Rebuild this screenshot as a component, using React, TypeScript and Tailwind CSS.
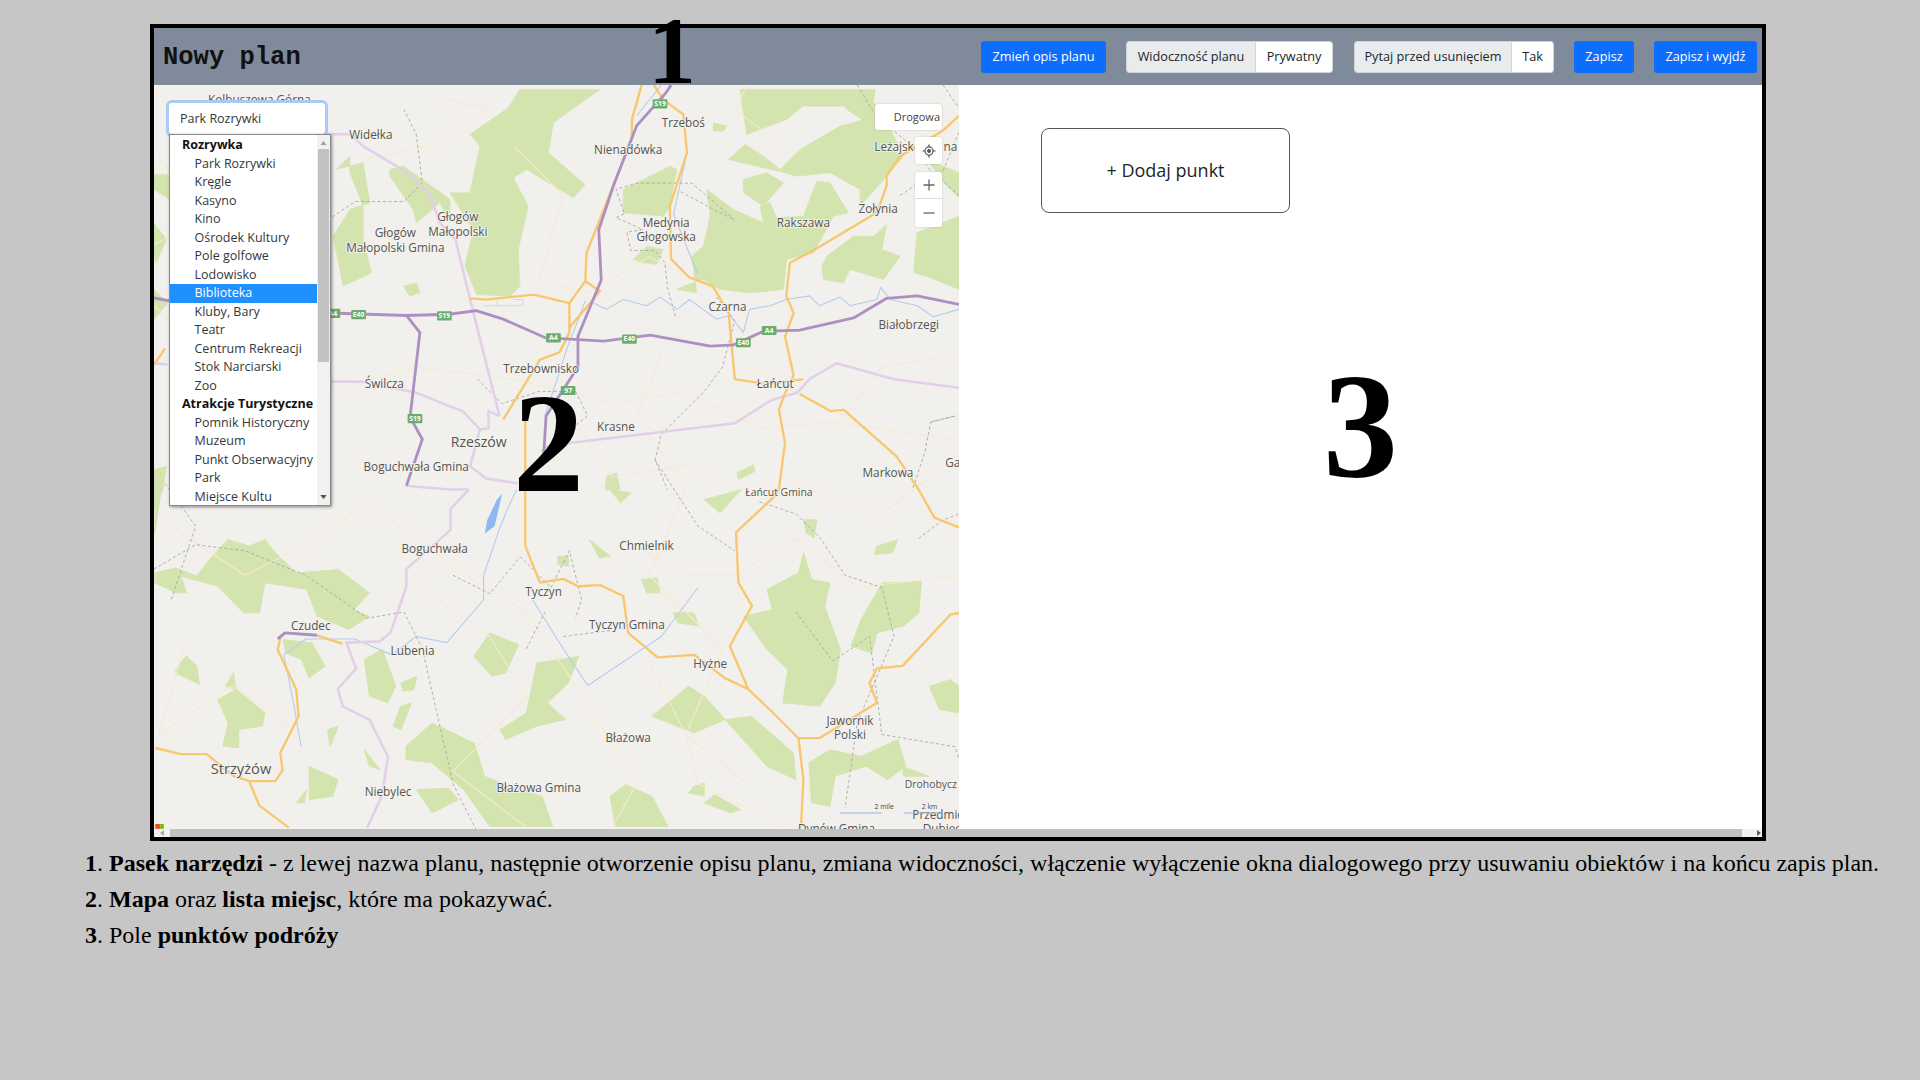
import React from "react";

// map is traced from the reference, so groups use the coordinates of the zoom they came from
const forestTop: string[] = [
  "175,55 60,135 90,170 60,310 0,310 70,420 45,530 80,615 180,620 210,590 205,480 235,350 190,265 230,240 370,325 405,285 295,190 310,100 450,0 210,0",
  "870,0 890,135 1010,90 1060,50 1180,50 1190,0",
  "1180,50 1190,60 1280,120 1380,120 1270,40 1275,0 1190,0",
  "770,300 850,360 940,400 930,350 960,340 980,385 1060,380 1100,275 1140,280 1195,370 1150,380 1090,490 1010,510 1000,600 900,610 810,600 760,570 700,590 680,600 740,610 725,500 760,470 780,380",
  "835,210 885,165 940,200 990,240 1050,180 1170,110 1300,75 1360,200 1310,260 1230,350 1230,300 1140,250 1040,260 1005,250",
  "880,270 950,250 1000,280 940,350 880,310",
  "520,300 660,230 680,240 660,350 640,380 520,370",
  "550,510 590,470 640,480 620,525 580,520",
  "1115,530 1130,500 1210,440 1270,440 1310,405 1295,480 1350,500 1300,570 1200,540 1180,580 1120,570",
  "1400,430 1527,380 1527,600 1430,560 1390,550",
  "790,100 830,110 820,125 790,125",
  "1430,210 1527,250 1527,325 1490,290",
  "860,1150 910,1125 915,1145 865,1170",
  "470,1160 500,1150 510,1200 465,1200",
];

const forestLeft: string[] = [
  "600,200 560,240 640,220 660,340 600,360 550,440 580,590 665,550 640,450 640,350 600,250",
  "720,240 760,230 860,300 900,330 900,400 870,340 800,400 790,360 720,260",
  "760,590 800,580 810,610 780,620",
  "12,255 55,255 60,330 12,300",
  "12,400 50,450 20,520 12,500",
  "12,600 55,640 12,690",
  "12,1140 50,1130 40,1200 12,1260",
];

const forestBottom: string[] = [
  "10,250 50,235 90,260 120,200 150,150 190,170 220,150 240,190 280,250 360,240 420,310 390,360 420,380 380,420 320,380 300,300 220,280 210,370 180,370 130,290 60,260 70,310 50,310 10,280",
  "255,450 310,460 335,530 305,565 290,510 260,490",
  "130,630 165,600 220,670 215,710 170,720 170,775 140,770 150,700",
  "50,540 70,500 90,530 95,585 50,550",
  "145,590 160,550 165,600",
  "410,510 445,480 470,590 455,640 420,620",
  "620,500 650,430 705,465 680,550 655,560",
  "740,520 820,500 800,580 760,640 795,690 740,710 680,750 670,720 720,670",
  "540,700 620,760 640,860 690,890 750,920 770,1010 650,1010 600,900 540,820 490,810 490,770",
  "305,830 360,870 350,920 305,930",
  "510,900 570,895 590,930 540,970",
  "880,920 910,885 960,920 990,1010 890,1010",
  "960,680 1030,590 1060,620 1100,690 1040,730",
  "1100,690 1150,680 1230,790 1235,870 1180,830",
  "1135,380 1190,360 1180,300 1240,250 1250,190 1265,270 1300,280 1290,350 1320,480 1310,580 1280,650 1210,640 1220,540 1180,480",
  "1400,280 1475,275 1470,370 1440,410 1390,430 1380,490 1340,470 1360,390",
  "1260,820 1300,780 1360,800 1430,750 1445,830 1410,870 1370,830 1310,860 1300,950 1265,940",
  "1490,590 1530,570 1547,590 1547,670 1510,660",
  "1390,170 1430,150 1420,190 1385,195",
  "1250,90 1275,90 1270,145 1255,130",
  "1060,30 1130,0 1090,70",
  "880,0 920,10 900,40",
  "840,150 880,200 860,205",
  "940,270 970,265 975,310 950,310",
  "1000,370 1040,370 1050,410 1010,400",
  "780,200 800,200 800,230 780,225",
  "1040,890 1060,880 1060,920 1030,910",
  "1060,940 1080,915 1130,960 1110,970",
  "1440,860 1490,860 1440,830",
  "10,20 20,20 10,130",
  "280,940 300,900 295,940",
  "340,720 360,710 345,770",
  "410,780 440,840 420,830",
  "480,650 500,640 480,720 465,710",
  "480,580 510,560 505,600 485,605",
];

const minorRoads: string[] = [
  "126,250 180,300 270,320 340,300 420,310 500,330 560,320 620,350 680,345 783,360",
  "420,120 460,160 440,230 480,240 530,210 590,240",
  "540,290 520,340 560,400 530,470 590,530 560,600 610,640",
  "610,300 690,340 720,300 783,290",
  "140,430 200,470 260,440 300,410 380,470 430,500 470,560 520,640 500,676",
  "330,470 400,520 430,570 370,630 430,676",
  "150,530 130,600 190,560 245,600",
  "480,480 510,440 560,470 600,470 650,440 700,480 783,470",
  "530,540 560,600 570,640 640,676",
  "660,400 720,420 760,390",
  "300,130 350,120 400,90 360,80",
  "640,120 600,90 610,70",
  "460,330 500,390 560,380 600,400",
  "130,130 170,180 126,200",
];

const borders: string[] = [
  "770,70 788,96 770,140 750,150 735,160",
  "556,157 580,170 600,180 565,150 520,150 503,155 510,175 503,178 525,188 512,190 515,205 535,205 543,215 545,235 552,260",
  "700,70 715,95 745,120 760,140 783,160",
  "585,243 600,262 590,300 575,320 540,355 535,376 545,400",
  "535,376 570,430 600,450",
  "126,465 160,445 200,450 250,470 300,505 330,500 345,530",
  "370,470 400,485 425,455 450,480 465,450 475,490 470,505",
  "430,530 445,500",
  "345,530 370,640 390,680",
  "460,520 500,515",
  "620,410 650,420 670,440 690,470 720,480 730,520 700,590 690,660",
  "650,500 680,540 710,520 720,600 780,610 783,620",
  "750,440 770,425 783,420",
  "760,345 780,340 760,345 755,370 745,400",
  "390,310 410,330 440,320 470,320 480,340 440,370",
  "268,180 290,165 330,165 345,150 340,110 330,90",
  "135,395 160,430 140,490",
];

const highways: string[] = [
  "122,243 160,250 270,256 332,258 367,257 389,254 411,261 445,276 493,279 531,274 580,283 599,282 623,271 653,270 697,260 724,244 749,242 783,249",
  "548,70 544,76 520,103 501,152 489,188 491,229 472,275 472,300 446,340 444,373",
  "332,258 343,272 335,341 345,359 332,397",
  "227,522 233,517 259,519",
];

const secondary: string[] = [
  "383,400 368,416 368,433 332,465 332,479 319,517 310,524 283,525 291,546 276,563 280,577 302,588 317,618 312,650 300,676",
  "465,362 600,346 630,327 651,321 661,310 683,297 730,310 783,317",
  "267,110 286,110 297,120 332,141 351,158 359,182 372,196 386,253 408,340",
  "408,340 399,336 399,350 392,351 378,336 367,332 340,321 296,312 270,312",
  "392,351 384,381 397,391 423,395",
  "332,397 367,400 383,400",
  "444,373 465,362",
  "126,297 137,298",
];

const orangeRoads: string[] = [
  "524,70 516,98 516,114 479,207 478,230 465,248 465,272 457,288 441,294 411,343",
  "384,244 397,245 436,241 465,248",
  "478,230 490,238 465,268",
  "534,70 542,82 558,94 561,125 547,169 548,212 563,227 582,234 595,256 600,310 626,314 656,310",
  "783,95 770,107 735,128 724,144 724,152 716,174 664,205 645,215 642,242 648,256 641,275 648,307 640,324 636,335 641,362 636,400 631,407 601,435 603,476 614,495 596,528 611,563 631,582 652,603 669,603 716,574 710,558 716,546 737,544 776,502 783,501",
  "653,322 678,336 689,335 732,373 750,400 763,423 783,431",
  "429,342 429,446 441,476 460,473 472,479 490,478 509,487 513,517 537,537 567,535 592,554 611,563",
  "652,603 656,637 654,676",
  "127,611 148,616 169,616 191,634 204,638 225,638 231,629 229,615 244,585 242,563 227,531 229,521",
  "259,519 280,526",
  "204,639 212,658 236,676",
  "126,298 135,285",
];

const rivers: string[] = [
  "485,248 495,253 509,245 528,250 539,243 553,253 563,245 585,261 596,258 607,272 612,253 629,250 642,245 661,242 669,250 686,243 694,250 716,245 719,235 727,245 749,250 762,259 783,253",
  "478,246 472,262 463,285 455,310 445,340",
  "422,400 414,417 408,432 395,470 395,490 365,525 340,520 320,535 290,522 250,522 232,535 240,575 246,610",
  "520,95 540,70",
  "560,130 550,175 570,225",
  "435,490 460,530 480,560 540,520 570,480",
];

const labels: [number, number, string, number?][] = [
  [212, 85, "Kolbuszowa Górna"],
  [303, 114, "Widełka"],
  [558, 104, "Trzeboś"],
  [513, 126, "Nienadówka"],
  [730, 124, "Leżajsk"],
  [776, 124, "na"],
  [717, 174, "Żołynia"],
  [656, 186, "Rakszawa"],
  [374, 181, "Głogów"],
  [374, 193, "Małopolski"],
  [323, 194, "Głogów"],
  [323, 206, "Małopolski Gmina"],
  [544, 186, "Medynia"],
  [544, 197, "Głogowska"],
  [594, 254, "Czarna"],
  [742, 269, "Białobrzegi"],
  [442, 305, "Trzebownisko"],
  [314, 317, "Świlcza"],
  [633, 317, "Łańcut"],
  [503, 352, "Krasne"],
  [391, 365, "Rzeszów", 11.5],
  [340, 385, "Boguchwała Gmina"],
  [725, 390, "Markowa"],
  [778, 382, "Ga"],
  [636, 405, "Łańcut Gmina", 8.5],
  [528, 449, "Chmielnik"],
  [355, 452, "Boguchwała"],
  [444, 487, "Tyczyn"],
  [512, 514, "Tyczyn Gmina"],
  [254, 515, "Czudec"],
  [337, 535, "Lubenia"],
  [580, 546, "Hyżne"],
  [694, 592, "Jawornik"],
  [694, 604, "Polski"],
  [513, 606, "Błażowa"],
  [197, 632, "Strzyżów", 12],
  [317, 650, "Niebylec"],
  [440, 647, "Błażowa Gmina"],
  [760, 644, "Drohobycz", 8.5],
  [766, 669, "Przedmie"],
  [683, 680, "Dynów Gmina"],
  [769, 680, "Dubiec"],
];

const shields: [number, number, string][] = [
  [539, 85, "S19"],
  [452, 276, "A4"],
  [514, 277, "E40"],
  [607, 280, "E40"],
  [628, 270, "A4"],
  [464, 319, "97"],
  [339, 342, "S19"],
  [363, 258, "S19"],
  [293, 257, "E40"],
  [272, 256, "A4"],
];

const places: { name: string; group?: boolean; active?: boolean }[] = [
  { name: "Rozrywka", group: true },
  { name: "Park Rozrywki" },
  { name: "Kręgle" },
  { name: "Kasyno" },
  { name: "Kino" },
  { name: "Ośrodek Kultury" },
  { name: "Pole golfowe" },
  { name: "Lodowisko" },
  { name: "Biblioteka", active: true },
  { name: "Kluby, Bary" },
  { name: "Teatr" },
  { name: "Centrum Rekreacji" },
  { name: "Stok Narciarski" },
  { name: "Zoo" },
  { name: "Atrakcje Turystyczne", group: true },
  { name: "Pomnik Historyczny" },
  { name: "Muzeum" },
  { name: "Punkt Obserwacyjny" },
  { name: "Park" },
  { name: "Miejsce Kultu" },
];

function Lines({ data, className, width }: { data: string[]; className: string; width: number }) {
  return (
    <>
      {data.map((points) => (
        <polyline key={points} points={points} fill="none" strokeWidth={width} strokeLinejoin="round" className={className} />
      ))}
    </>
  );
}

function MapDrawing() {
  return (
    <svg viewBox="126 70 657 607" className="absolute inset-0 h-full w-full" aria-hidden="true">
      <rect x="126" y="70" width="657" height="607" fill="#f1f0ec" />
      <g fill="#d3e4ae" stroke="#d3e4ae" strokeWidth="2" strokeLinejoin="round">
        <g transform="translate(367.5 73.5) scale(.2722)">
          {forestTop.map((p) => <polygon key={p} points={p} />)}
        </g>
        <g transform="translate(122.5 73.5) scale(.2722)">
          {forestLeft.map((p) => <polygon key={p} points={p} />)}
        </g>
        <g transform="translate(122.5 400) scale(.427 .2722)">
          {forestBottom.map((p) => <polygon key={p} points={p} />)}
        </g>
      </g>
      <Lines data={minorRoads} className="stroke-[#f6ead0]" width={0.9} />
      <Lines data={rivers} className="stroke-[#b4ccee]" width={0.9} />
      <polygon points="398,425 406,408 410,404 404,430 396,436" fill="#8fb8f0" />
      <g strokeDasharray="2.5 2">
        <Lines data={borders} className="stroke-[#a5a5a0]" width={0.7} />
      </g>
      <Lines data={secondary} className="stroke-[#e2cfe8]" width={2.1} />
      <Lines data={orangeRoads} className="stroke-[#f8c76d]" width={1.9} />
      <Lines data={highways} className="stroke-[#ae8fc2]" width={2.3} />
      <path d="M395 250h32v-5h-8M406 250v-4" fill="none" stroke="#cfcdc9" strokeWidth="0.6" />
      {shields.map(([x, y, text]) => (
        <g key={`${x}-${y}`}>
          <rect x={x - 6} y={y - 3.5} width="12" height="7.5" rx="0.8" fill="#6aae6d" />
          <text x={x} y={y + 2.2} textAnchor="middle" fontSize="5.6" fontWeight="700" fill="#ffffff" className="font-['Open_Sans',sans-serif]">
            {text}
          </text>
        </g>
      ))}
      <g fill="#55534f" textAnchor="middle" className="font-['Open_Sans',sans-serif]">
        {labels.map(([x, y, text, size]) => (
          <text key={`${text}-${x}`} x={x} y={y} fontSize={size ?? 9.6} stroke="#f4f3ef" strokeWidth="1.4" className="[paint-order:stroke]">
            {text}
          </text>
        ))}
      </g>
      {/* scale */}
      <g fontSize="5.6" fill="#444444" textAnchor="middle" className="font-['Open_Sans',sans-serif]">
        <text x="722" y="661">2 mile</text>
        <text x="759" y="661">2 km</text>
      </g>
      <path d="M686 664h34M738 664h32" stroke="#8fb8ee" strokeWidth="0.9" fill="none" />
      <rect x="127" y="673" width="4" height="4" fill="#f25022" />
      <rect x="131" y="673" width="3" height="4" fill="#7fba00" />
    </svg>
  );
}

function PlaceSelect() {
  return (
    <div className="absolute left-[15px] top-[18px] z-10 w-[162px] text-[#33373b]">
      <div className="h-[31px] w-[156px] rounded-[3px] bg-white pl-[11px] text-[12.5px] leading-[31px] shadow-[0_0_0_3px_#a9c9f7]">
        Park Rozrywki
      </div>
      <div className="flex h-[372px] border border-[#8a8a8a] bg-white shadow-[1px_1px_3px_rgba(0,0,0,0.45)]">
        <ul className="w-[147px] shrink-0 pt-[1px]">
          {places.map((place) => (
            <li
              key={place.name}
              className={`h-[18.5px] truncate text-[12.5px] leading-[18.5px] ${
                place.group ? "pl-[12px] font-bold text-[#111111]" : "pl-[24.5px]"
              } ${place.active ? "bg-[#1e90ff] text-white" : ""}`}
            >
              {place.name}
            </li>
          ))}
        </ul>
        <div className="flex w-[14px] flex-col items-center bg-[#f1f1f1]">
          <svg viewBox="0 0 8 5" className="mt-[6px] h-[4px] w-[7px] fill-[#a3a3a3]">
            <path d="M4 0l4 5H0z" />
          </svg>
          <div className="mt-[4px] h-[213px] w-[11px] bg-[#c1c1c1]" />
          <svg viewBox="0 0 8 5" className="mt-auto mb-[6px] h-[4px] w-[7px] fill-[#505050]">
            <path d="M0 0h8L4 5z" />
          </svg>
        </div>
      </div>
    </div>
  );
}

function MapControls() {
  return (
    <div className="absolute right-[17px] top-[19px] z-10 flex flex-col items-end text-[#444444]">
      <div className="flex h-[26px] w-[67px] items-center justify-end rounded-[3px] bg-white pr-[2px] text-[11px] shadow-[0_0_2px_rgba(0,0,0,0.2)]">
        Drogowa
      </div>
      <div className="mt-[7px] flex h-[27px] w-[27px] items-center justify-center rounded-[2px] bg-white shadow-[0_0_2px_rgba(0,0,0,0.2)]">
        <svg viewBox="0 0 16 16" className="h-[14px] w-[14px] fill-none stroke-[#555555]" strokeWidth="1.4">
          <circle cx="8" cy="8" r="4.6" />
          <circle cx="8" cy="8" r="1.6" className="fill-[#555555]" />
          <path d="M8 0.5v3M8 12.5v3M0.5 8h3M12.5 8h3" />
        </svg>
      </div>
      <div className="mt-[8px] flex w-[27px] flex-col rounded-[2px] bg-white shadow-[0_0_2px_rgba(0,0,0,0.2)]">
        <div className="flex h-[27px] items-center justify-center border-b border-[#dddddd]">
          <svg viewBox="0 0 12 12" className="h-[12px] w-[12px] stroke-[#666666]" strokeWidth="1.3">
            <path d="M6 0.5v11M0.5 6h11" />
          </svg>
        </div>
        <div className="flex h-[28px] items-center justify-center">
          <svg viewBox="0 0 12 12" className="h-[12px] w-[12px] stroke-[#666666]" strokeWidth="1.3">
            <path d="M0.5 6h11" />
          </svg>
        </div>
      </div>
    </div>
  );
}

function Toolbar() {
  const blueButton = "flex h-[32px] items-center justify-center rounded-[3px] bg-[#0d6efd] text-white";
  const addon = "flex h-full items-center justify-center bg-[#e9ecef] text-[#212529]";
  const value = "flex h-full items-center justify-center bg-white text-[#212529]";

  return (
    <header className="flex h-[57px] shrink-0 items-center bg-[#7f8a9a] pl-[9px] pr-[5px]">
      <h1 className="mt-[3px] font-['Liberation_Mono',monospace] text-[25.5px] font-bold leading-none text-[#111111]">Nowy plan</h1>
      <div className="ml-auto flex items-center text-[12.7px] font-['Open_Sans',sans-serif]">
        <button className={`${blueButton} w-[125px]`}>Zmień opis planu</button>
        <div className="ml-[20px] flex h-[32px] w-[207px] overflow-hidden rounded-[3px] border border-[#ced4da]">
          <span className={`${addon} w-[129px] border-r border-[#ced4da]`}>Widoczność planu</span>
          <span className={`${value} flex-1`}>Prywatny</span>
        </div>
        <div className="ml-[21px] flex h-[32px] w-[200px] overflow-hidden rounded-[3px] border border-[#ced4da]">
          <span className={`${addon} w-[157px] border-r border-[#ced4da]`}>Pytaj przed usunięciem</span>
          <span className={`${value} flex-1`}>Tak</span>
        </div>
        <button className={`${blueButton} ml-[20px] w-[60px]`}>Zapisz</button>
        <button className={`${blueButton} ml-[20px] w-[103px]`}>Zapisz i wyjdź</button>
      </div>
    </header>
  );
}

function BottomScrollbar() {
  return (
    <div className="flex h-[8px] shrink-0 items-stretch bg-[#f1f1f1]">
      <div className="flex w-[16px] items-center justify-center">
        <svg viewBox="0 0 5 8" className="h-[6px] w-[4px] fill-[#a3a3a3]">
          <path d="M0 4l5-4v8z" />
        </svg>
      </div>
      <div className="flex-1 bg-[#c1c1c1]" />
      <div className="flex w-[20px] items-center justify-end pr-[1px]">
        <svg viewBox="0 0 5 8" className="h-[6px] w-[4px] fill-[#505050]">
          <path d="M5 4L0 0v8z" />
        </svg>
      </div>
    </div>
  );
}

export default function App() {
  return (
    <div className="relative min-h-[1080px] bg-[#c6c6c6] pt-[24px] font-['Liberation_Serif',serif] text-black">
      <div className="relative ml-[150px] flex h-[817px] w-[1616px] flex-col border-4 border-black bg-white">
        <Toolbar />
        <div className="flex min-h-0 flex-1 font-['Open_Sans',sans-serif]">
          <div className="relative w-[805px] shrink-0 overflow-hidden">
            <MapDrawing />
            <PlaceSelect />
            <MapControls />
          </div>
          <div className="flex-1 pl-[82px] pt-[43px]">
            <button className="flex h-[85px] w-[249px] items-center justify-center rounded-[8px] border border-[#555555] text-[18px] text-[#212529]">
              + Dodaj punkt
            </button>
          </div>
        </div>
        <BottomScrollbar />

        {/* numbers written over the screenshot */}
        <span className="absolute left-[494px] top-[-32px] text-[96px] font-bold leading-[1.15] font-['Liberation_Serif',serif]">1</span>
        <span className="absolute left-[359px] top-[344px] text-[142px] font-bold leading-none font-['Liberation_Serif',serif]">2</span>
        <span className="absolute left-[1169px] top-[323px] text-[150px] font-bold leading-none font-['Liberation_Serif',serif]">3</span>
      </div>
      <div className="mt-[4px] pl-[85px] text-[24px] leading-[36px]">
        <p>
          <b>1</b>. <b>Pasek narzędzi</b> - z lewej nazwa planu, następnie otworzenie opisu planu, zmiana widoczności, włączenie wyłączenie okna dialogowego przy usuwaniu obiektów i na końcu zapis plan.
        </p>
        <p>
          <b>2</b>. <b>Mapa</b> oraz <b>lista miejsc</b>, które ma pokazywać.
        </p>
        <p>
          <b>3</b>. Pole <b>punktów podróży</b>
        </p>
      </div>
    </div>
  );
}
